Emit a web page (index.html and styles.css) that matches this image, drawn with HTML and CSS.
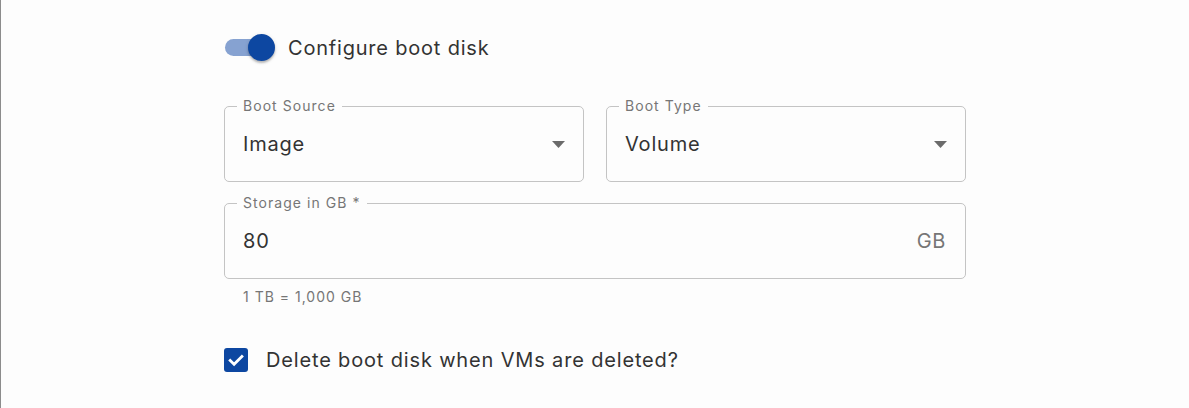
FILE: index.html
```html
<!DOCTYPE html>
<html lang="en">
<head>
<meta charset="utf-8">
<title>Boot disk</title>
<link rel="stylesheet" href="styles.css">
</head>
<body>
<div class="form">
  <div class="toggle-row">
    <span class="switch" role="switch" aria-checked="true">
      <span class="switch-track"></span>
      <span class="switch-thumb"></span>
    </span>
    <span class="toggle-label">Configure boot disk</span>
  </div>

  <div class="select-row">
    <div class="field">
      <span class="field-label">Boot Source</span>
      <span class="field-value">Image</span>
      <svg class="caret" width="13" height="7" viewBox="0 0 13 7"><polygon points="0,0 13,0 6.5,7" fill="#6b6b6b"/></svg>
    </div>
    <div class="field">
      <span class="field-label">Boot Type</span>
      <span class="field-value">Volume</span>
      <svg class="caret" width="13" height="7" viewBox="0 0 13 7"><polygon points="0,0 13,0 6.5,7" fill="#6b6b6b"/></svg>
    </div>
  </div>

  <div class="field storage">
    <span class="field-label">Storage in GB *</span>
    <span class="field-value">80</span>
    <span class="suffix">GB</span>
  </div>
  <div class="helper">1 TB = 1,000 GB</div>

  <div class="check-row">
    <span class="checkbox">
      <svg width="24" height="24" viewBox="0 0 24 24"><path d="M6.2 12.4l3.9 3.9 7.8-7.8" fill="none" stroke="#fff" stroke-width="2.8" stroke-linecap="square"/></svg>
    </span>
    <span class="check-label">Delete boot disk when VMs are deleted?</span>
  </div>
</div>
</body>
</html>
```

FILE: styles.css
```css
html, body {
  margin: 0;
  padding: 0;
  background: #fdfdfd;
}
body {
  border-left: 1px solid #8c8c8c;
  min-height: 408px;
  box-sizing: border-box;
  font-family: Inter, "Noto Sans", sans-serif;
  color: #333333;
}
.form {
  width: 742px;
  margin: 0 auto;
  padding-top: 34px;
}
.toggle-row {
  display: flex;
  align-items: center;
  height: 27px;
}
.switch {
  position: relative;
  width: 50px;
  height: 27px;
  margin-left: 1px;
  flex: none;
}
.switch-track {
  position: absolute;
  left: 0;
  top: 5px;
  width: 44px;
  height: 17px;
  border-radius: 9px;
  background: #86a2d1;
}
.switch-thumb {
  position: absolute;
  left: 23px;
  top: 0;
  width: 27px;
  height: 27px;
  border-radius: 50%;
  background: #0d47a1;
  box-shadow: 0 2px 2px rgba(0,0,0,0.22), 0 1px 4px rgba(0,0,0,0.12);
}
.toggle-label {
  margin-left: 13px;
  font-size: 20px;
  line-height: 27px;
  letter-spacing: 0.8px;
  padding-top: 1px;
}
.select-row {
  display: grid;
  grid-template-columns: 1fr 1fr;
  gap: 22px;
  margin-top: 45px;
}
.field {
  position: relative;
  box-sizing: border-box;
  height: 76px;
  border: 1px solid #c4c4c4;
  border-radius: 5px;
  display: flex;
  align-items: center;
  padding: 0 18px 0 18px;
  background: #fdfdfd;
}
.field-label {
  position: absolute;
  top: -9px;
  left: 12px;
  padding: 0 6px;
  background: #fdfdfd;
  font-size: 14px;
  line-height: 16px;
  letter-spacing: 1.05px;
  color: #767676;
}
.field-value {
  flex: 1;
  font-size: 20px;
  line-height: 24px;
  letter-spacing: 0.8px;
  color: #333333;
}
.caret {
  flex: none;
  margin-top: 1px;
}
.storage {
  margin-top: 21px;
  padding-right: 19px;
}
.suffix {
  font-size: 20px;
  line-height: 24px;
  letter-spacing: 0.6px;
  color: #767676;
}
.helper {
  margin-top: 8px;
  padding-left: 19px;
  font-size: 14px;
  line-height: 20px;
  letter-spacing: 1px;
  color: #767676;
}
.check-row {
  display: flex;
  align-items: center;
  margin-top: 41px;
}
.checkbox {
  width: 24px;
  height: 24px;
  border-radius: 3px;
  background: #0d47a1;
  display: flex;
  flex: none;
}
.check-label {
  margin-left: 18px;
  font-size: 20px;
  line-height: 24px;
  letter-spacing: 0.84px;
}
```
